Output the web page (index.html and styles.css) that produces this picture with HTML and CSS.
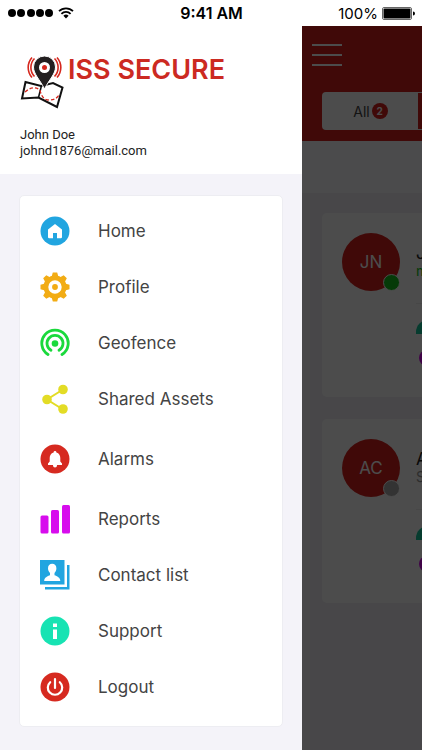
FILE: index.html
```html
<!DOCTYPE html>
<html lang="en">
<head>
  <meta charset="UTF-8">
  <meta name="viewport" content="width=device-width, initial-scale=1.0">
  <title>ISS Secure</title>
  <link rel="stylesheet" href="styles.css">
</head>
<body>
  <div class="status-bar">
    <div class="status-left">
      <svg class="signal" viewBox="0 0 46 10" width="46" height="10">
        <circle cx="4" cy="5" r="4"/>
        <circle cx="13" cy="5" r="4"/>
        <circle cx="23" cy="5" r="4"/>
        <circle cx="32" cy="5" r="4"/>
        <circle cx="41" cy="5" r="4"/>
      </svg>
      <svg class="wifi" viewBox="0 0 16 12" width="16" height="12">
        <path d="M1 4.2a10 10 0 0 1 14 0M3.4 6.8a6.5 6.5 0 0 1 9.2 0" fill="none" stroke="#000" stroke-width="1.8"/>
        <path d="M5.4 8.8a3.7 3.7 0 0 1 5.2 0L8 11.6z"/>
      </svg>
    </div>
    <span class="time">9:41 AM</span>
    <div class="status-right">
      <span>100%</span>
      <svg viewBox="0 0 33 13" width="33" height="13">
        <rect x=".5" y=".5" width="29" height="12" rx="1.5" fill="#fff" stroke="#666"/>
        <rect x="1.5" y="1.5" width="27" height="10" rx="1"/>
        <path d="M31 4.5a2 2 0 0 1 0 4z"/>
      </svg>
    </div>
  </div>

  <div class="app">
    <aside class="drawer">
      <div class="drawer-header">
        <div class="logo">
          <svg viewBox="0 0 44 56" width="44" height="56">
            <path d="M5.500 27L2 43.500l16.500-1L37 52l5.500-19.500L33 28l-12 3z" fill="#fff" stroke="#111" stroke-width="2"/>
            <path d="M18.500 42.500l3-12" stroke="#111" stroke-width="1.500"/>
            <path d="M5 37q8-7 15-2 2 10 9 10 7 0 10-5" fill="none" stroke="#d5281e" stroke-width="1.300" stroke-dasharray="3.500 2"/>
            <path d="M24.500 1a11 11 0 0 1 11 11C35.500 19 29.500 24 24.500 34 19.500 24 13.500 19 13.500 12A11 11 0 0 1 24.500 1z" fill="#231f20" stroke="#fff"/>
            <circle cx="24.500" cy="12.500" r="5.500" fill="#fff"/>
            <circle cx="24.500" cy="12.500" r="2.500" fill="#d5281e"/>
            <path d="M14.500 3.500a13 13 0 0 0 0 18M12 2.500a15 15 0 0 0 0 20M34.500 3.500a13 13 0 0 1 0 18M37 2.500a15 15 0 0 1 0 20" fill="none" stroke="#d5281e" stroke-width="1.600"/>
          </svg>
          <span class="logo-text">ISS SECURE</span>
        </div>
        <div class="user">
          <div>John Doe</div>
          <div>johnd1876@mail.com</div>
        </div>
      </div>

      <nav class="menu">
        <a class="menu-item" href="#">
          <svg viewBox="0 0 30 30">
            <circle cx="15" cy="15" r="14.500" fill="#21a5e0"/>
            <path d="M15 8l7 5.500V21a1.200 1.200 0 0 1-1.200 1.200H17V17h-4v5.200H9.200A1.200 1.200 0 0 1 8 21v-7.500z" fill="#fff"/>
          </svg>
          Home
        </a>
        <a class="menu-item" href="#">
          <svg viewBox="0 0 30 30">
            <g fill="#f2ac14">
              <circle cx="15" cy="15" r="11.500"/>
              <path id="teeth" d="M11.500 5L12.800.5h4.400L18.500 5zM11.500 25l1.300 4.500h4.400l1.300-4.500zM5 11.500L.5 12.800v4.400L5 18.500zM25 11.500l4.500 1.300v4.400L25 18.500z"/>
              <use href="#teeth" transform="rotate(45 15 15)"/>
            </g>
            <circle cx="15" cy="15" r="4.800" fill="none" stroke="#fff" stroke-width="3.800"/>
          </svg>
          Profile
        </a>
        <a class="menu-item" href="#">
          <svg viewBox="0 0 30 30">
            <g fill="none" stroke="#1ad93c" stroke-width="2.800" stroke-linecap="round">
              <path d="M8 26.500a13.200 13.200 0 1 1 14 0"/>
              <path d="M11 22.300a8 8 0 1 1 8 0"/>
            </g>
            <circle cx="15" cy="15.500" r="3.300" fill="#1ad93c"/>
          </svg>
          Geofence
        </a>
        <a class="menu-item" href="#">
          <svg viewBox="0 0 30 30">
            <path d="M23 5.500L7 15.500l16 10" fill="none" stroke="#e3dc25" stroke-width="2"/>
            <g fill="#e3dc25">
              <circle cx="23" cy="5.500" r="4.800"/>
              <circle cx="7" cy="15.500" r="4.800"/>
              <circle cx="23" cy="25" r="4.800"/>
            </g>
          </svg>
          Shared Assets
        </a>
        <a class="menu-item menu-item-tall" href="#">
          <svg viewBox="0 0 30 30">
            <circle cx="15" cy="15" r="14.500" fill="#d62a20"/>
            <path d="M15 7a1.400 1.400 0 0 1 1.400 1.400C19.200 9.200 20.300 11.500 20.300 14v3.500l1.700 2v1.500H8v-1.500l1.700-2V14c0-2.500 1.100-4.800 3.900-5.600A1.400 1.400 0 0 1 15 7zM13 21h4v.5a2 2 0 0 1-4 0z" fill="#fff"/>
          </svg>
          Alarms
        </a>
        <a class="menu-item" href="#">
          <svg viewBox="0 0 30 30" fill="#d70ced">
            <rect x=".5" y="11.500" width="8" height="18" rx="1.500"/>
            <rect x="11" y="6" width="8" height="23.500" rx="1.500"/>
            <rect x="22" y="1" width="8" height="28.500" rx="1.500"/>
          </svg>
          Reports
        </a>
        <a class="menu-item" href="#">
          <svg viewBox="0 0 30 30">
            <path d="M0 0h24.500v24.500H0zM27 5h2.500v24.500H5V27h22z" fill="#21a5e0"/>
            <path d="M12.200 3.800c2.500 0 4.200 1.700 4.200 4.400 0 2.200-.8 3.600-1.900 4.700v2.400c2.400.9 5.800 2.200 5.800 5.700H4.200c0-3.500 3.400-4.800 5.800-5.700v-2.400C8.900 11.800 8 10.400 8 8.200c0-2.700 1.700-4.400 4.200-4.400z" fill="#fff"/>
          </svg>
          Contact list
        </a>
        <a class="menu-item" href="#">
          <svg viewBox="0 0 30 30">
            <circle cx="15" cy="15" r="14.500" fill="#17e3b3"/>
            <path d="M13 7.500h4v3.500h-4zM13 13.500h4V23h-4z" fill="#fff"/>
          </svg>
          Support
        </a>
        <a class="menu-item" href="#">
          <svg viewBox="0 0 30 30">
            <circle cx="15" cy="15" r="14.500" fill="#d62a20"/>
            <path d="M15 7v9M10.200 10.200a7.200 7.200 0 1 0 9.600 0" fill="none" stroke="#fff" stroke-width="2.200" stroke-linecap="round"/>
          </svg>
          Logout
        </a>
      </nav>
    </aside>

    <main class="page">
      <header class="page-header">
        <button class="burger" aria-label="Menu">
          <span></span>
          <span></span>
          <span></span>
        </button>
        <div class="tabs">
          <button class="tab">All <span class="count">2</span></button>
        </div>
      </header>
      <div class="search-bar"></div>

      <section class="card">
        <div class="avatar">JN<span class="dot online"></span></div>
        <div class="info">
          <div class="name">J</div>
          <div class="state moving">m</div>
          <div class="badges">
            <span class="badge teal"></span>
            <span class="badge purple"></span>
          </div>
        </div>
      </section>

      <section class="card">
        <div class="avatar">AC<span class="dot"></span></div>
        <div class="info">
          <div class="name">A</div>
          <div class="state">S</div>
          <div class="badges">
            <span class="badge teal"></span>
            <span class="badge purple"></span>
          </div>
        </div>
      </section>
      <div class="overlay"></div>
    </main>
  </div>
</body>
</html>
```
FILE: styles.css
```css
* {
  box-sizing: border-box;
}

body {
  margin: 0;
  min-height: 100vh;
  display: flex;
  flex-direction: column;
  font-family: Inter, "Liberation Sans", sans-serif;
  background-color: #fff;
  color: #222;
}

button {
  border: none;
  padding: 0;
  font-family: inherit;
  cursor: pointer;
}

/* status bar */
.status-bar {
  display: flex;
  align-items: center;
  height: 26px;
  padding: 0 7px 0 8px;
  font-size: 16px;
  color: #000;
}

.status-left,
.status-right {
  flex: 1;
  display: flex;
  align-items: center;
  gap: 4px;
}

.status-right {
  justify-content: flex-end;
  font-size: 15px;
}

.time {
  font-weight: 600;
}

.app {
  flex: 1;
  display: flex;
}

/* drawer */
.drawer {
  flex: 0 0 302px;
  background-color: #f4f3f9;
}

.drawer-header {
  height: 148px;
  padding: 29px 20px 0;
  background-color: #fff;
}

.logo {
  display: flex;
  gap: 4px;
}

.logo-text {
  font-size: 27px;
  font-weight: 600;
  line-height: 30px;
  color: #cc2a22;
}

.user {
  margin-top: 16px;
  font-family: Roboto, sans-serif;
  font-size: 13px;
  line-height: 16px;
}

.menu {
  margin: 21px 19px 24px;
  padding: 7px 20px 11px;
  background-color: #fff;
  border: 1px solid #ededf2;
  border-radius: 5px;
}

.menu-item {
  display: flex;
  align-items: center;
  gap: 28px;
  height: 56px;
  font-size: 17px;
  color: #444;
  text-decoration: none;
}

.menu-item-tall {
  height: 64px;
}

.menu-item svg {
  width: 30px;
  height: 30px;
}

/* page behind the drawer */
.page {
  position: relative;
  flex: 1;
  min-width: 0;
  overflow: hidden;
  background-color: #f0eff5;
}

.overlay {
  position: absolute;
  inset: 0;
  background-color: rgba(0, 0, 0, 0.7);
}

.page-header {
  height: 115px;
  padding: 18px 0 0 10px;
  background-color: #d5201c;
}

.burger {
  display: flex;
  flex-direction: column;
  gap: 8px;
  width: 30px;
  background: none;
}

.burger span {
  width: 30px;
  height: 2px;
  background-color: #fff;
}

.tabs {
  margin: 26px 0 0 10px;
  border: 1px solid #fff;
  border-right: none;
  border-radius: 4px 0 0 4px;
}

.tab {
  display: flex;
  align-items: center;
  justify-content: center;
  gap: 2px;
  width: 95px;
  height: 36px;
  background-color: #fff;
  font-size: 14px;
  color: #444;
}

.count {
  width: 16px;
  height: 16px;
  border-radius: 50%;
  background-color: #d5201c;
  color: #fff;
  font-size: 10px;
  font-weight: 700;
  line-height: 16px;
}

.search-bar {
  height: 52px;
  background-color: #fcfcfd;
}

.card {
  display: flex;
  gap: 16px;
  height: 184px;
  margin: 20px 0 22px 20px;
  padding: 20px 0 0 20px;
  background-color: #fff;
  border-radius: 5px 0 0 5px;
}

.avatar {
  position: relative;
  flex: 0 0 58px;
  height: 58px;
  border-radius: 50%;
  background-color: #d5201c;
  color: #fff;
  font-size: 17px;
  line-height: 58px;
  text-align: center;
}

.dot {
  position: absolute;
  right: 0;
  bottom: 0;
  width: 17px;
  height: 17px;
  border: 1px solid #fff;
  border-radius: 50%;
  background-color: #aaa;
}

.dot.online {
  background-color: #12c41c;
}

.info {
  flex-shrink: 0;
  padding-top: 10px;
}

.name {
  font-size: 17px;
  line-height: 20px;
}

.state {
  font-size: 14px;
  line-height: 16px;
  color: #999;
}

.state.moving {
  color: #12c41c;
}

.badges {
  display: flex;
  flex-direction: column;
  gap: 16px;
  margin-top: 24px;
  padding-top: 16px;
  border-top: 1px solid #eee;
}

.badge.teal {
  width: 24px;
  height: 14px;
  border-radius: 12px 12px 0 0;
  background-color: #17c99f;
}

.badge.purple {
  width: 16px;
  height: 16px;
  margin-left: 3px;
  border-radius: 50%;
  background-color: #d70ced;
}
```
